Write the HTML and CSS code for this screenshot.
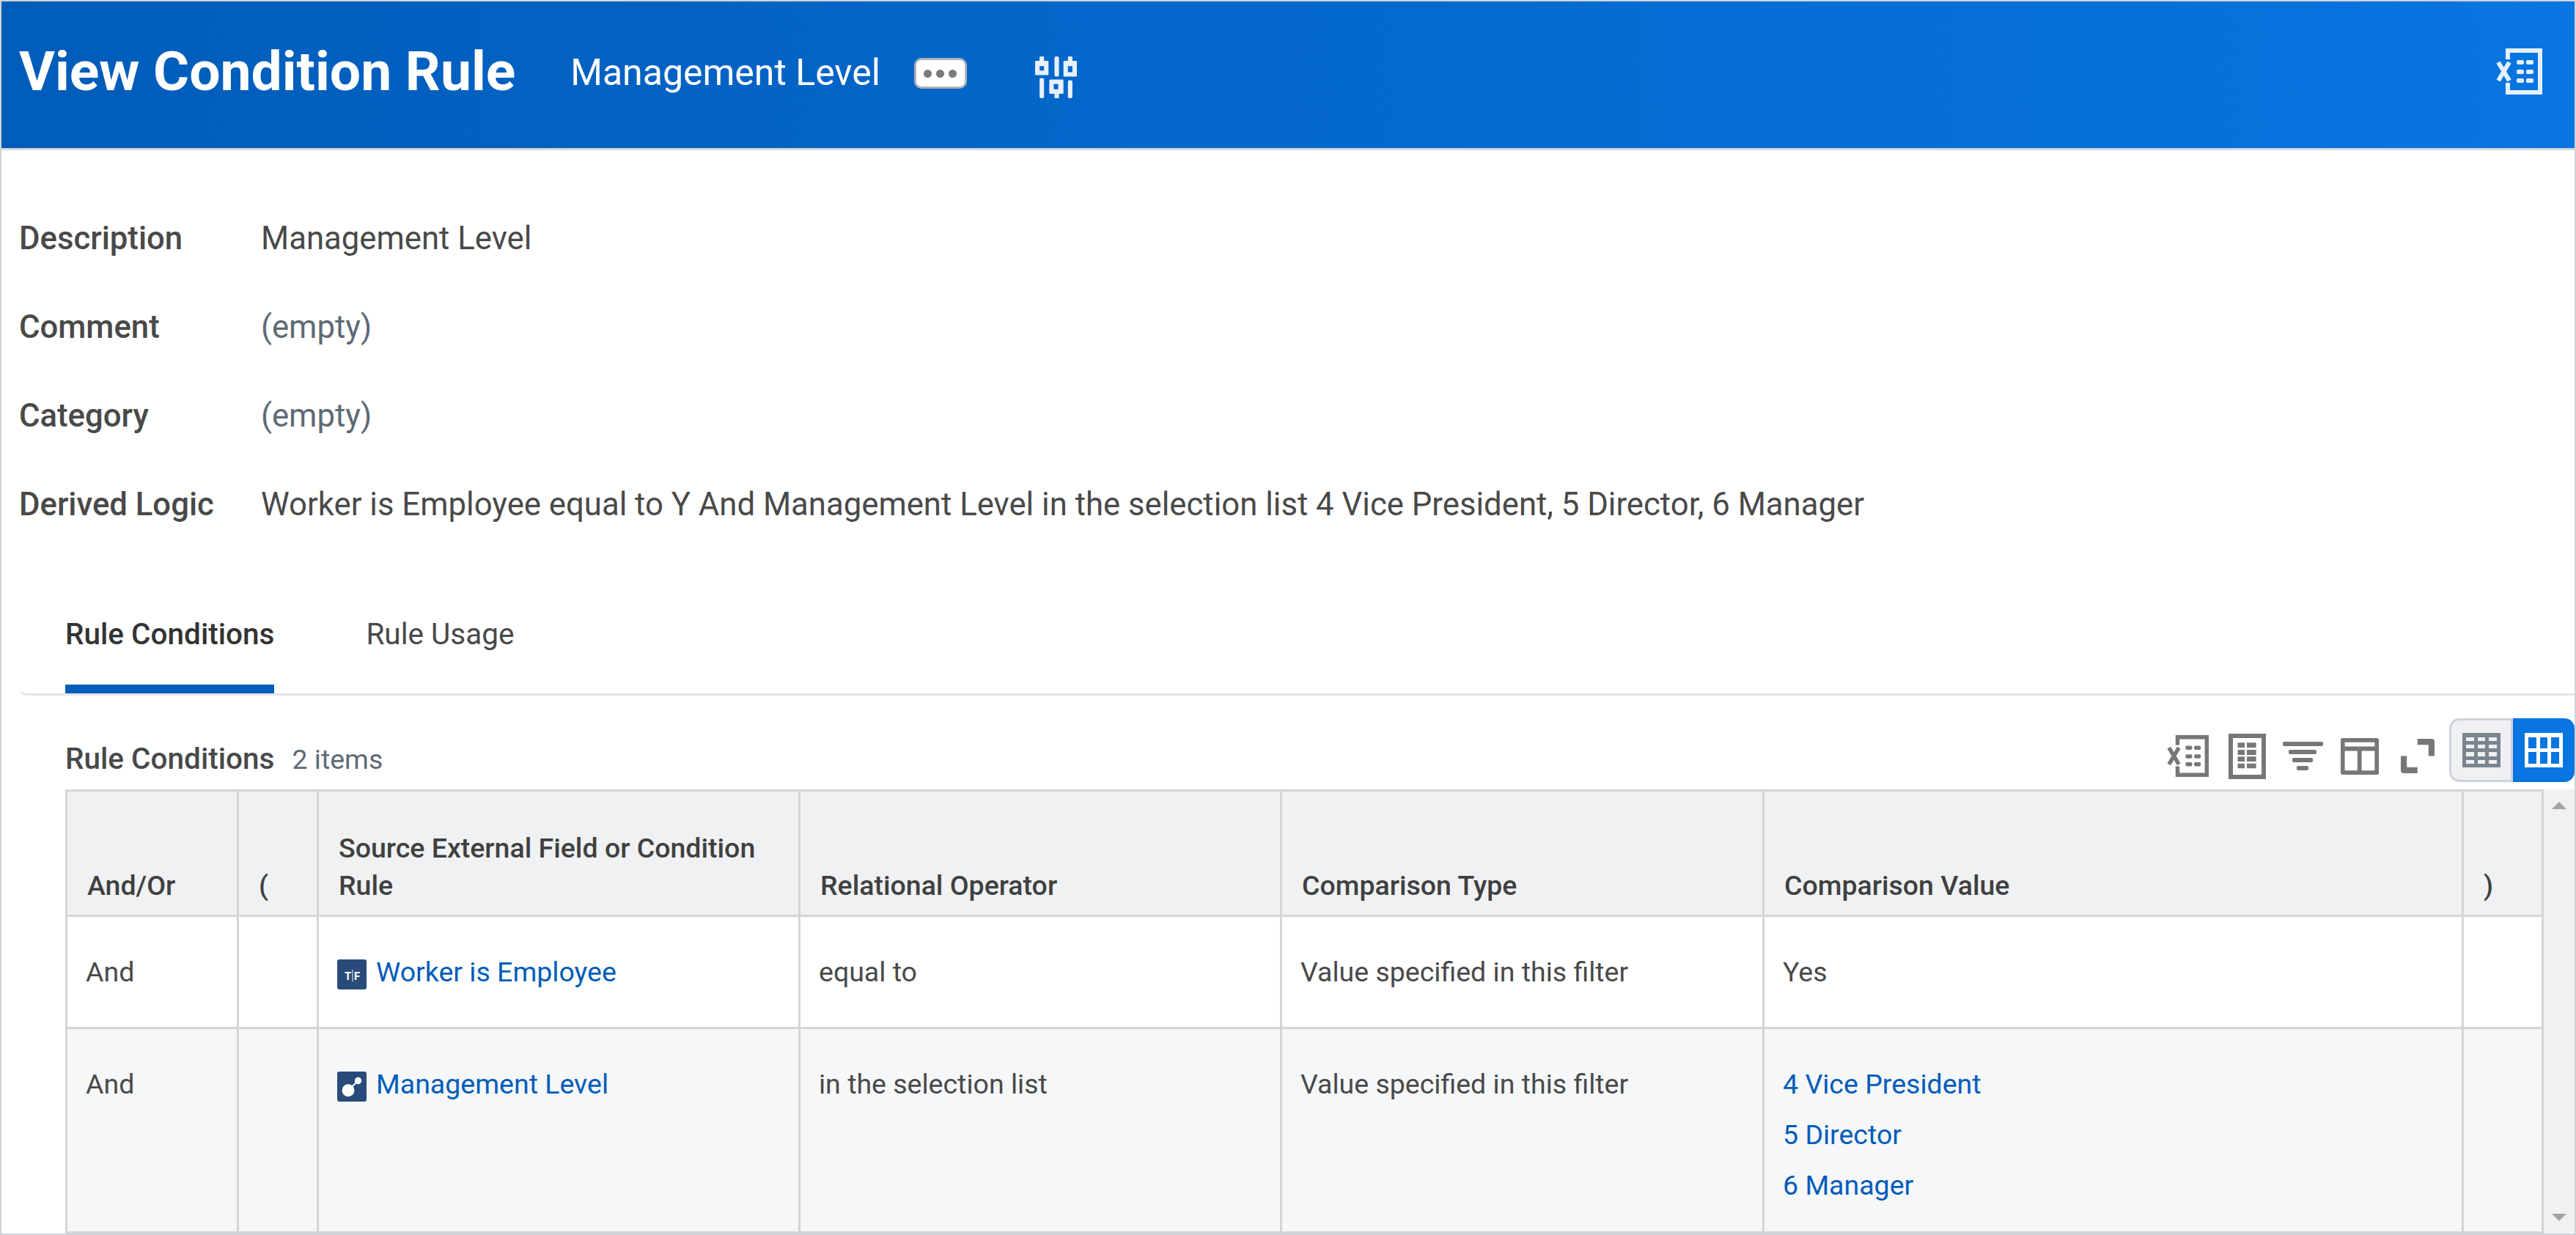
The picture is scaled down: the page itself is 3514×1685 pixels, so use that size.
FILE: index.html
```html
<!DOCTYPE html>
<html lang="en">
<head>
    <meta charset="UTF-8">
    <title>View Condition Rule</title>
    <link rel="stylesheet" href="styles.css">
</head>
<body>

    <svg class="defs" width="0" height="0">
        <symbol id="excel" viewBox="0 0 63 63">
            <path d="M16 15V3H60V60H16V47" fill="none" stroke="currentColor" stroke-width="6"/>
            <path d="M3 19L18 44M18 19L3 44" fill="none" stroke="currentColor" stroke-width="6"/>
            <rect x="28" y="16" width="10" height="6" rx="2" fill="currentColor"/>
            <rect x="41" y="16" width="10" height="6" rx="2" fill="currentColor"/>
            <rect x="28" y="29" width="10" height="6" rx="2" fill="currentColor"/>
            <rect x="41" y="29" width="10" height="6" rx="2" fill="currentColor"/>
            <rect x="28" y="41" width="10" height="6" rx="2" fill="currentColor"/>
            <rect x="41" y="41" width="10" height="6" rx="2" fill="currentColor"/>
        </symbol>
    </svg>

    <header class="top-bar">
        <h1 class="page-title">View Condition Rule</h1>
        <span class="page-sub">Management Level</span>
        <button class="dots-btn"><span></span><span></span><span></span></button>
        <svg class="sliders" viewBox="0 0 56 56">
            <path fill="#e6f0fb" fill-rule="evenodd" d="M6 1a1 1 0 0 1 1-1h4a1 1 0 0 1 1 1v5h5a1 1 0 0 1 1 1v17a1 1 0 0 1-1 1H1a1 1 0 0 1-1-1V7a1 1 0 0 1 1-1h5zM6 13v6h6v-6z"/>
            <rect x="6" y="29" width="6" height="27" rx="2" fill="#e6f0fb"/>
            <rect x="26" y="0" width="6" height="27" rx="2" fill="#e6f0fb"/>
            <path fill="#e6f0fb" fill-rule="evenodd" d="M20 31h17a1 1 0 0 1 1 1v17a1 1 0 0 1-1 1h-5v5a1 1 0 0 1-1 1h-4a1 1 0 0 1-1-1v-5h-6a1 1 0 0 1-1-1V32a1 1 0 0 1 1-1zM25 37v7h6v-7z"/>
            <path fill="#e6f0fb" fill-rule="evenodd" d="M44 1a1 1 0 0 1 1-1h4a1 1 0 0 1 1 1v5h5a1 1 0 0 1 1 1v19a1 1 0 0 1-1 1H39a1 1 0 0 1-1-1V7a1 1 0 0 1 1-1h5zM44 13v8h6v-8z"/>
            <rect x="44" y="32" width="6" height="24" rx="2" fill="#e6f0fb"/>
        </svg>
        <svg class="top-excel"><use href="#excel"/></svg>
    </header>

    <section class="info">
        <div class="info-row"><span class="info-label">Description</span><span>Management Level</span></div>
        <div class="info-row"><span class="info-label">Comment</span><span class="empty">(empty)</span></div>
        <div class="info-row"><span class="info-label">Category</span><span class="empty">(empty)</span></div>
        <div class="info-row"><span class="info-label">Derived Logic</span><span>Worker is Employee equal to Y And Management Level in the selection list 4 Vice President, 5 Director, 6 Manager</span></div>
    </section>

    <nav class="tabs">
        <a class="tab active">Rule Conditions</a>
        <a class="tab">Rule Usage</a>
    </nav>

    <div class="grid-head">
        <div class="grid-title">Rule Conditions <span class="count">2 items</span></div>
        <div class="tools">
            <svg class="tool excel-tool"><use href="#excel"/></svg>
            <svg class="tool doc-tool" viewBox="0 0 51 62">
                <path d="M3 3H48V59H3Z" fill="none" stroke="currentColor" stroke-width="6"/>
                <path fill="currentColor" d="M12.500 12.300h9.500v6.700h-9.500zM25 12.300h12.600v6.700H25zM12.500 22h9.500v7h-9.500zM25 22h12.600v7H25zM12.500 31.300h9.500V38h-9.500zM25 31.300h12.600V38H25zM12.500 40.700h9.500v6.600h-9.500zM25 40.700h12.600v6.600H25z"/>
            </svg>
            <svg class="tool filter-tool" viewBox="0 0 55 39">
                <rect x="0" y="0" width="55" height="6" rx="2" fill="currentColor"/>
                <rect x="8" y="11" width="38" height="6" rx="2" fill="currentColor"/>
                <rect x="13" y="22" width="28" height="6" rx="2" fill="currentColor"/>
                <rect x="19" y="33" width="16" height="6" rx="2" fill="currentColor"/>
            </svg>
            <svg class="tool layout-tool" viewBox="0 0 51 49">
                <path d="M2.750 2.750H48.250V46.250H2.750Z" fill="none" stroke="currentColor" stroke-width="5.500" stroke-linejoin="round"/>
                <path d="M3 14.200H48M25.200 14.200V46" fill="none" stroke="currentColor" stroke-width="5.700"/>
            </svg>
            <svg class="tool expand-tool" viewBox="0 0 45 46">
                <path d="M22.300 4H41V23M4 23V42H22.300" fill="none" stroke="currentColor" stroke-width="8" stroke-linejoin="round"/>
            </svg>
            <div class="view-toggle">
                <span class="toggle-left">
                    <svg class="toggle-icon" viewBox="0 0 52 47">
                        <rect width="52" height="47" fill="#7b858f"/>
                        <path fill="#eef0f2" d="M5 6h11v5H5zM21 6h10v5H21zM36 6h11v5H36zM5 16h11v5H5zM21 16h10v5H21zM36 16h11v5H36zM5 26h11v6H5zM21 26h10v6H21zM36 26h11v6H36zM5 37h11v5H5zM21 37h10v5H21zM36 37h11v5H36z"/>
                    </svg>
                </span>
                <span class="toggle-right">
                    <svg class="toggle-icon" viewBox="0 0 52 47">
                        <rect width="52" height="47" fill="#fff"/>
                        <path fill="#0875e1" d="M5 6h11v15H5zM21 6h10v15H21zM36 6h11v15H36zM5 26h11v16H5zM21 26h10v16H21zM36 26h11v16H36z"/>
                    </svg>
                </span>
            </div>
        </div>
    </div>

    <div class="grid-wrap">
        <table class="grid">
            <colgroup>
                <col class="col-andor"><col class="col-paren"><col class="col-wide"><col class="col-wide"><col class="col-wide2"><col class="col-value"><col class="col-paren">
            </colgroup>
            <thead>
                <tr>
                    <th>And/Or</th>
                    <th>(</th>
                    <th>Source External Field or Condition Rule</th>
                    <th>Relational Operator</th>
                    <th>Comparison Type</th>
                    <th>Comparison Value</th>
                    <th>)</th>
                </tr>
            </thead>
            <tbody>
                <tr>
                    <td>And</td>
                    <td></td>
                    <td>
                        <svg class="field-icon" viewBox="0 0 40 41">
                            <rect width="40" height="41" rx="3" fill="#284b7a"/>
                            <text x="10" y="28" class="tf">T</text>
                            <path d="M21 14V30" stroke="#fff" stroke-width="1"/>
                            <text x="23" y="28" class="tf">F</text>
                        </svg><a class="link">Worker is Employee</a>
                    </td>
                    <td>equal to</td>
                    <td>Value specified in this filter</td>
                    <td>Yes</td>
                    <td></td>
                </tr>
                <tr class="alt">
                    <td>And</td>
                    <td></td>
                    <td>
                        <svg class="field-icon" viewBox="0 0 40 41">
                            <rect width="40" height="41" rx="3" fill="#284b7a"/>
                            <circle cx="15" cy="25.700" r="8.500" fill="#fff"/>
                            <circle cx="28.500" cy="12.500" r="4.700" fill="#fff"/>
                            <path d="M15 25.700L28.500 12.500" stroke="#fff" stroke-width="2"/>
                        </svg><a class="link">Management Level</a>
                    </td>
                    <td>in the selection list</td>
                    <td>Value specified in this filter</td>
                    <td>
                        <a class="link block">4 Vice President</a>
                        <a class="link block">5 Director</a>
                        <a class="link block">6 Manager</a>
                    </td>
                    <td></td>
                </tr>
            </tbody>
        </table>
        <div class="scrollbar">
            <i class="arrow-up"></i>
            <i class="arrow-down"></i>
        </div>
    </div>

</body>
</html>
```

FILE: styles.css
```css
html, body {
    margin: 0;
    padding: 0;
}

body {
    box-sizing: border-box;
    width: 3514px;
    height: 1685px;
    overflow: hidden;
    border: 2px solid #d0d4d9;
    background: #fff;
    font-family: 'Roboto', sans-serif;
    font-size: 43.700px;
    color: #494949;
}

.defs {
    position: absolute;
}

/* header */
.top-bar {
    display: flex;
    align-items: center;
    padding: 0 44px 10px 24px;
    box-sizing: border-box;
    border-bottom: 3px solid #d5d8dc;
    height: 203px;
    background: linear-gradient(90deg, #005cb9, #0875e1);
    color: #fff;
}

.page-title {
    margin: 0;
    font-size: 75px;
    font-weight: 700;
    line-height: 80px;
}

.page-sub {
    margin: 4px 0 0 75px;
    font-size: 50px;
}

.dots-btn {
    display: flex;
    justify-content: center;
    align-items: center;
    gap: 6px;
    box-sizing: border-box;
    width: 72px;
    height: 42px;
    margin: 6px 0 0 46px;
    padding: 0;
    border: 3px solid #b0b3b8;
    border-radius: 10px;
    background: #fff;
}

.dots-btn span {
    width: 11px;
    height: 11px;
    border-radius: 50%;
    background: #7b7b7b;
}

.sliders {
    width: 57px;
    height: 57px;
    margin: 17px 0 0 93px;
}

.top-excel {
    width: 63px;
    height: 63px;
    margin-left: auto;
    color: #e6f0fb;
}

/* description rows */
.info {
    padding-top: 60px;
}

.info-row {
    display: flex;
    height: 121px;
    line-height: 121px;
    padding-left: 24px;
}

.info-label {
    width: 330px;
    font-weight: 500;
}

.empty {
    color: #5e6a75;
}

/* tabs */
.tabs {
    display: flex;
    gap: 125px;
    margin: 51px 0 0 24px;
    padding-left: 63px;
    border-bottom: 3px solid #e2e6ea;
    border-bottom-left-radius: 10px;
}

.tab {
    padding: 35px 0 39px;
    border-bottom: 12px solid transparent;
    line-height: 60px;
    font-size: 40.500px;
}

.tab.active {
    border-bottom-color: #005cb9;
    color: #333;
    font-weight: 500;
}

/* grid toolbar */
.grid-head {
    display: flex;
    justify-content: space-between;
    align-items: flex-end;
    height: 128px;
    padding: 31px 0 10px 87px;
    box-sizing: border-box;
}

.grid-title {
    font-size: 40.500px;
    font-weight: 500;
    line-height: 62px;
}

.count {
    margin-left: 14px;
    font-size: 37.500px;
    font-weight: 400;
    color: #5e6a75;
}

.tools {
    display: flex;
    align-items: center;
}

.tool {
    color: #777;
    margin-top: 16px;
}

.excel-tool { width: 57px; height: 57px; }
.doc-tool { width: 51px; height: 62px; margin-left: 27px; }
.filter-tool { width: 55px; height: 39px; margin-left: 23px; }
.layout-tool { width: 52px; height: 50px; margin-left: 24px; }
.expand-tool { width: 46px; height: 47px; margin-left: 30px; margin-right: 20px; }

.view-toggle {
    display: flex;
    width: 171px;
    height: 87px;
}

.toggle-left, .toggle-right {
    display: flex;
    justify-content: center;
    align-items: center;
    box-sizing: border-box;
}

.toggle-left {
    width: 87px;
    border: 3px solid #ced3d9;
    border-radius: 14px 0 0 14px;
    background: #eff0f2;
}

.toggle-right {
    width: 84px;
    border-radius: 0 14px 14px 0;
    background: #0875e1;
}

.toggle-icon {
    width: 52px;
    height: 47px;
}

/* grid */
.grid-wrap {
    display: flex;
    margin-left: 87px;
}

.grid {
    width: 3381px;
    table-layout: fixed;
    border-collapse: separate;
    border-spacing: 0;
    border-top: 3px solid #d4d5d7;
    border-left: 3px solid #d4d5d7;
    font-size: 37.500px;
}

.col-andor { width: 234px; }
.col-paren { width: 109px; }
.col-wide { width: 657px; }
.col-wide2 { width: 658px; }
.col-value { width: 954px; }

.grid th, .grid td {
    box-sizing: border-box;
    border-right: 3px solid #d4d5d7;
    border-bottom: 3px solid #d4d5d7;
    text-align: left;
}

.grid th {
    height: 171px;
    padding: 0 27px 14px;
    background: #f0f1f2;
    vertical-align: bottom;
    font-weight: 500;
    line-height: 51px;
    color: #404040;
}

.grid td {
    padding: 41px 25px 40px;
    vertical-align: top;
    line-height: 69px;
}

.grid .alt td {
    padding-bottom: 28px;
    background: #f6f7f9;
}

.link {
    color: #005cb9;
}

.block {
    display: block;
}

.field-icon {
    width: 40px;
    height: 41px;
    margin-right: 13px;
    vertical-align: -11px;
}

.tf {
    font-family: 'Roboto', sans-serif;
    font-size: 15px;
    font-weight: 700;
    fill: #fff;
}

.scrollbar {
    display: flex;
    flex-direction: column;
    justify-content: space-between;
    align-items: center;
    box-sizing: border-box;
    width: 42px;
    padding: 17px 0 17px;
    background: #f1f1f1;
}

.arrow-up, .arrow-down {
    width: 0;
    height: 0;
    border-left: 10px solid transparent;
    border-right: 10px solid transparent;
}

.arrow-up {
    border-bottom: 10px solid #a3a3a3;
}

.arrow-down {
    border-top: 10px solid #a3a3a3;
}
```
